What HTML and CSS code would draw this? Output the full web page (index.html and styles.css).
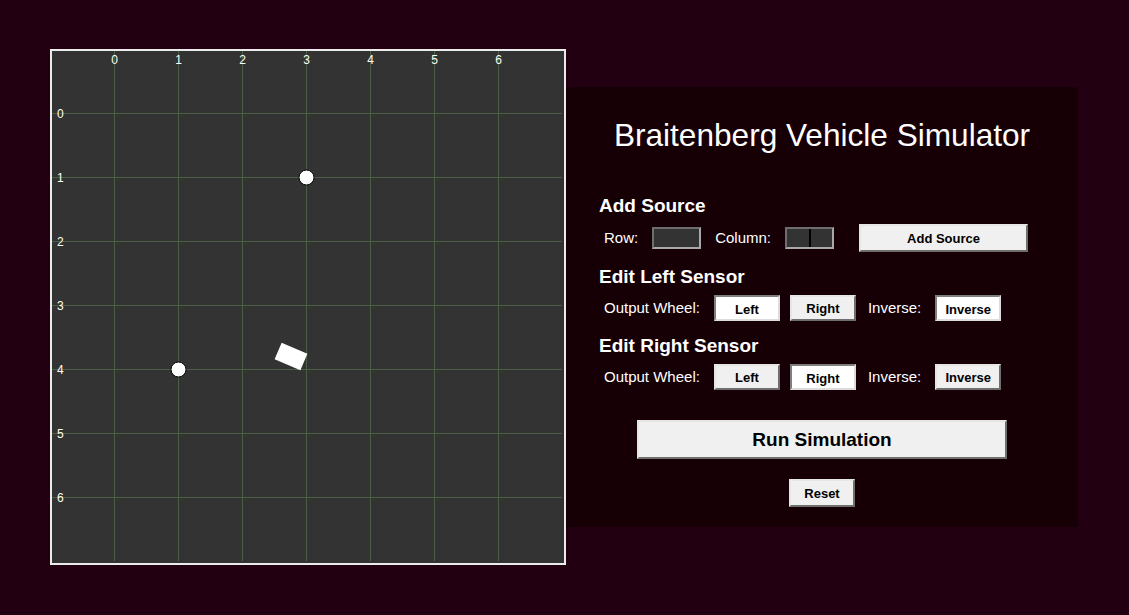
FILE: index.html
```html
<!DOCTYPE html>
<html lang="en">
<head>
<meta charset="utf-8">
<title>Braitenberg Vehicle Simulator</title>
<link rel="stylesheet" href="styles.css">
</head>
<body>
<div class="page">
  <div class="board">
    <svg class="grid" width="512" height="512" viewBox="0 0 512 512">
      <g class="lines" stroke="#4b6043" stroke-width="1">
        <line x1="62.5" y1="0" x2="62.5" y2="510"/>
        <line x1="126.5" y1="0" x2="126.5" y2="510"/>
        <line x1="190.5" y1="0" x2="190.5" y2="510"/>
        <line x1="254.5" y1="0" x2="254.5" y2="510"/>
        <line x1="318.5" y1="0" x2="318.5" y2="510"/>
        <line x1="382.5" y1="0" x2="382.5" y2="510"/>
        <line x1="446.5" y1="0" x2="446.5" y2="510"/>
        <line x1="0" y1="62.5" x2="510" y2="62.5"/>
        <line x1="0" y1="126.5" x2="510" y2="126.5"/>
        <line x1="0" y1="190.5" x2="510" y2="190.5"/>
        <line x1="0" y1="254.5" x2="510" y2="254.5"/>
        <line x1="0" y1="318.5" x2="510" y2="318.5"/>
        <line x1="0" y1="382.5" x2="510" y2="382.5"/>
        <line x1="0" y1="446.5" x2="510" y2="446.5"/>
      </g>
      <g class="axis" text-anchor="middle">
        <text x="62.5" y="13">0</text>
        <text x="126.5" y="13">1</text>
        <text x="190.5" y="13">2</text>
        <text x="254.5" y="13">3</text>
        <text x="318.5" y="13">4</text>
        <text x="382.5" y="13">5</text>
        <text x="446.5" y="13">6</text>
      </g>
      <g class="axis">
        <text x="5" y="67">0</text>
        <text x="5" y="131">1</text>
        <text x="5" y="195">2</text>
        <text x="5" y="259">3</text>
        <text x="5" y="323">4</text>
        <text x="5" y="387">5</text>
        <text x="5" y="451">6</text>
      </g>
      <circle cx="254.5" cy="126.5" r="7.5" fill="#fff" stroke="#000" stroke-width="1"/>
      <circle cx="126.5" cy="318.5" r="7.5" fill="#fff" stroke="#000" stroke-width="1"/>
      <rect x="-14" y="-9" width="28" height="18" fill="#fff" transform="translate(239 305.5) rotate(23)"/>
    </svg>
  </div>

  <div class="panel">
    <h1 class="title">Braitenberg Vehicle Simulator</h1>

    <section class="section first">
      <h2 class="heading">Add Source</h2>
      <div class="row">
        <span class="label">Row:</span>
        <input class="field" type="text" aria-label="Row">
        <span class="label">Column:</span>
        <input class="field caret" type="text" aria-label="Column">
        <button class="btn wide" type="button">Add Source</button>
      </div>
    </section>

    <section class="section">
      <h2 class="heading">Edit Left Sensor</h2>
      <div class="row">
        <span class="label">Output Wheel:</span>
        <div class="group">
          <button class="btn toggle on" type="button">Left</button>
          <button class="btn toggle" type="button">Right</button>
        </div>
        <span class="label inv">Inverse:</span>
        <button class="btn toggle on" type="button">Inverse</button>
      </div>
    </section>

    <section class="section">
      <h2 class="heading">Edit Right Sensor</h2>
      <div class="row">
        <span class="label">Output Wheel:</span>
        <div class="group">
          <button class="btn toggle" type="button">Left</button>
          <button class="btn toggle on" type="button">Right</button>
        </div>
        <span class="label inv">Inverse:</span>
        <button class="btn toggle" type="button">Inverse</button>
      </div>
    </section>

    <div class="actions">
      <button class="btn run" type="button">Run Simulation</button>
      <button class="btn reset" type="button">Reset</button>
    </div>
  </div>
</div>
</body>
</html>
```

FILE: styles.css
```css
html, body {
  margin: 0;
  background: #230011;
  font-family: "Liberation Sans", Arial, sans-serif;
}

.page {
  display: flex;
  align-items: flex-start;
  padding: 49px 0 0 50px;
}

.board {
  width: 512px;
  height: 512px;
  border: 2px solid #ececec;
  background: #333333;
  flex: none;
}

.grid {
  display: block;
}

.axis {
  font-family: "Liberation Sans", Arial, sans-serif;
  font-size: 12px;
  fill: #fffff4;
}

.panel {
  width: 512px;
  height: 440px;
  box-sizing: border-box;
  margin-top: 38px;
  padding-top: 30px;
  background: #160006;
  color: #fff;
  flex: none;
}

.title {
  margin: 0;
  font-size: 31.6px;
  font-weight: normal;
  line-height: 36px;
  text-align: center;
}

.section {
  padding-left: 33px;
  margin-top: 13px;
}

.section.first {
  margin-top: 41px;
}

.heading {
  margin: 0 0 7px;
  padding-top: 1px;
  font-size: 19px;
  font-weight: bold;
  line-height: 22px;
}

.row {
  display: flex;
  align-items: center;
  gap: 14px;
  padding-left: 5px;
}

.label {
  font-size: 15px;
  line-height: 18px;
}

.label.inv {
  margin-left: -2px;
}

.group {
  display: flex;
  gap: 10px;
}

.field {
  width: 49px;
  height: 22px;
  box-sizing: border-box;
  margin: 0;
  padding: 0;
  border: 2px solid;
  border-color: #6e6e6e #a9a9a9 #a9a9a9 #6e6e6e;
  background: #333333;
  outline: none;
}

.field.caret {
  background-image: linear-gradient(#000, #000);
  background-repeat: no-repeat;
  background-size: 2px 18px;
  background-position: 22px center;
}

.btn {
  box-sizing: border-box;
  margin: 0;
  padding: 0;
  font-family: "Liberation Sans", Arial, sans-serif;
  font-weight: bold;
  font-size: 13px;
  color: #000;
  background: #f0f0f0;
  border: 2px solid;
  border-color: #e6e6e6 #6f6f6f #6f6f6f #e6e6e6;
  border-radius: 0;
}

.btn.wide {
  width: 169px;
  height: 28px;
  margin-left: 11px;
}

.btn.toggle {
  width: 66px;
  height: 26px;
}

.btn.toggle.on {
  background: #fff;
  border-color: #7f7f7f #dcdcdc #dcdcdc #7f7f7f;
  padding-top: 3px;
}

.actions {
  display: flex;
  flex-direction: column;
  align-items: center;
  gap: 20px;
  margin-top: 30px;
}

.btn.run {
  width: 370px;
  height: 39px;
  font-size: 19px;
}

.btn.reset {
  width: 66px;
  height: 28px;
}
```
